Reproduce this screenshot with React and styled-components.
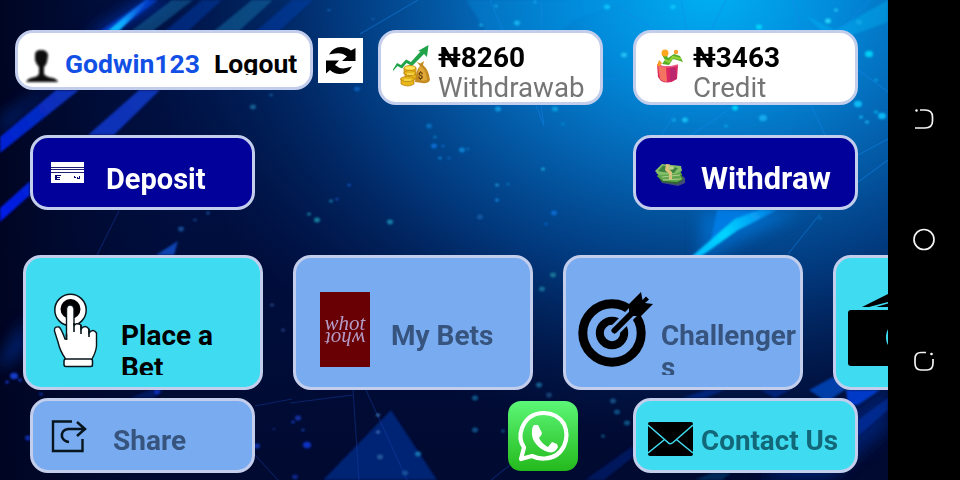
import React from "react";
import styled, { createGlobalStyle } from "styled-components";

const GlobalStyle = createGlobalStyle`
  * { box-sizing: border-box; }
  html, body { margin: 0; padding: 0; background: #000; }
  body { font-family: Roboto, "Liberation Sans", sans-serif; }
`;

const Device = styled.div`
  display: flex;
  width: 960px;
  height: 480px;
  overflow: hidden;
  background: #000;
`;

const Screen = styled.main`
  position: relative;
  width: 888px;
  height: 480px;
  overflow: hidden;
  background: #010b35;
`;

const Backdrop = styled.svg`
  position: absolute;
  inset: 0;
  display: block;
`;

const Content = styled.div`
  position: relative;
  display: flex;
  flex-direction: column;
  width: 888px;
  height: 480px;
  padding-top: 30px;
`;

const Row = styled.div`
  display: flex;
  flex: none;
  align-items: flex-start;
  height: ${(p) => p.$height}px;
  margin-bottom: ${(p) => p.$after || 0}px;
  padding-left: ${(p) => p.$left}px;
  padding-right: 30px;
  justify-content: ${(p) => (p.$spread ? "space-between" : "flex-start")};
  gap: ${(p) => p.$gap || 0}px;
`;

const tones = {
  white: "#ffffff",
  navy: "#02029a",
  cyan: "#3fdcf1",
  sky: "#78abef",
};

const Card = styled.div`
  display: flex;
  flex: none;
  align-items: flex-start;
  width: ${(p) => p.$width}px;
  height: ${(p) => p.$height || 75}px;
  border: 3px solid #c3cdec;
  border-radius: 18px;
  background: ${(p) => tones[p.$tone]};
  overflow: hidden;
`;

const UserCard = styled(Card)`
  width: 298px;
  height: 60px;
`;

const RefreshButton = styled.button`
  display: block;
  flex: none;
  width: 45px;
  height: 45px;
  margin: 8px 15px 0 5px;
  padding: 0;
  border: 0;
  background: #fff;
`;

const Spacer = styled.div`
  width: 30px;
  flex: none;
`;

const Icon = styled.svg`
  display: block;
  flex: none;
  margin-left: ${(p) => p.$left || 0}px;
  margin-top: ${(p) => p.$top || 0}px;
  overflow: visible;
`;

const Label = styled.span`
  display: block;
  flex: none;
  margin-left: ${(p) => p.$left || 0}px;
  margin-top: ${(p) => p.$top || 0}px;
  width: ${(p) => (p.$width ? `${p.$width}px` : "auto")};
  height: ${(p) => (p.$height ? `${p.$height}px` : "auto")};
  overflow: ${(p) => (p.$height ? "hidden" : "visible")};
  color: ${(p) => p.$color || "#000"};
  font-size: ${(p) => p.$size || 28}px;
  line-height: 32px;
  font-weight: 700;
  white-space: ${(p) => (p.$wrap ? "normal" : "nowrap")};
  word-break: ${(p) => (p.$wrap ? "break-all" : "normal")};
`;

const Balance = styled.div`
  display: flex;
  flex-direction: column;
  margin: 10px 0 0 ${(p) => p.$left}px;
`;

const Amount = styled.strong`
  font-size: 28px;
  line-height: 30px;
  font-weight: 700;
  white-space: nowrap;
`;

const Caption = styled.span`
  color: #757575;
  font-size: 27.7px;
  line-height: 30px;
  white-space: nowrap;
`;

const WhotCard = styled.div`
  display: flex;
  flex: none;
  flex-direction: column;
  align-items: center;
  width: 50px;
  height: 75px;
  margin: 34px 0 0 24px;
  padding-top: 21px;
  background: #690003;
  color: #b49cc8;
`;

const WhotWord = styled.span`
  display: block;
  height: 18px;
  font: italic 21px/20px "Liberation Serif", serif;
  transform: ${(p) => (p.$flipped ? "rotate(180deg)" : "none")};
`;

const WhatsAppButton = styled.button`
  display: block;
  flex: none;
  width: 70px;
  height: 70px;
  margin: 3px 0 0;
  padding: 0;
  border: 0;
  border-radius: 13px;
  background: linear-gradient(#5cf777, #24b91c);
`;

const NavBar = styled.nav`
  display: flex;
  flex: none;
  flex-direction: column;
  align-items: center;
  width: 72px;
  height: 480px;
  padding-top: 107px;
  gap: 97px;
`;

const dots = [
  [181,229,3,"#15549b"],[195,220,2,"#123f83"],[208,213,2,"#15549b"],[309,214,2,"#168ba8"],[317,220,3,"#1592ad"],[271,95,2,"#115b9e"],[253,107,3,"#146b9b"],[357,89,3,"#0962bd"],[329,10,2,"#135ba9"],[373,19,2,"#135ba9"],
  [429,126,3,"#0873c4"],[435,137,2,"#0875be"],[434,146,3,"#0873dc"],[443,146,2,"#0863b9"],[462,150,3,"#0989dd"],[468,149,2,"#0968b4"],[440,158,2,"#0b85d2"],[449,158,2,"#0961b8"],[349,185,2,"#1051bd"],[331,201,2,"#1683ae"],[337,199,2,"#1645a3"],[390,222,3,"#168eb5"],
  [481,25,2,"#1ab5ef"],[496,6,2,"#15a2eb"],[535,2,2,"#15a5ef"],[517,23,3,"#1bbdf6"],[498,109,3,"#13a1e9"],[555,109,3,"#10a6e4"],[563,124,2,"#0789d3"],[543,169,2,"#26b3e5"],[497,185,2,"#2298d8"],[508,184,2,"#086bb7"],[497,200,2,"#168ce0"],[480,217,3,"#155ca8"],[554,213,3,"#0870dc"],[546,224,2,"#075ec7"],
  [607,7,3,"#10c9ff"],[673,7,3,"#08c6fa"],[759,27,3,"#00dfff"],[836,10,2,"#2ecef9"],[828,21,3,"#2de0ff"],[859,22,3,"#12a9e9"],[624,55,3,"#29c8fa"],[869,54,4,"#00deff"],[876,80,2,"#09a1e4"],[858,104,4,"#09c8ff"],[876,112,2,"#06baf4"],[861,117,2,"#18bdf5"],[882,116,4,"#08c4ff"],[867,122,2,"#1cc1f7"],[735,108,3,"#00e1ff"],[763,118,4,"#17b2f5"],[674,120,2,"#17baf4"],[685,120,3,"#1cc8fa"],[726,126,2,"#0ba8e8"],[820,218,2,"#0b71ba"],
  [272,305,2,"#285082"],[283,330,2,"#28478d"],[14,376,4,"#1446e7"],[7,382,2,"#1239dd"],[20,380,2,"#143ad0"],[41,394,2,"#0d32b9"],[157,392,3,"#0e31c9"],[298,418,3,"#1739bb"],[293,422,2,"#1739bb"],[303,430,2,"#153b9f"],[307,445,4,"#1239de"],[274,429,2,"#112768"],[257,446,3,"#1238bd"],[295,477,3,"#112b99"],
  [378,415,2,"#4488c9"],[378,432,2,"#4a82c7"],[418,454,3,"#1781bd"],[380,457,3,"#2b61a0"],[405,473,3,"#1c5ba0"],[475,398,3,"#126498"],[475,430,3,"#135e95"],[503,431,2,"#135c95"],[553,275,3,"#21839f"],[542,289,3,"#16779e"],[539,385,3,"#166c9f"],[549,395,3,"#15497e"],[613,401,3,"#155a90"],[617,412,3,"#135a93"],[627,423,3,"#0c6194"],[603,436,2,"#14618f"],[28,438,3,"#1237c8"],
];

function Scenery() {
  return (
    <Backdrop width="888" height="480" viewBox="0 0 888 480" aria-hidden="true">
      <defs>
        <linearGradient id="base" x1="0" y1="0" x2="0" y2="1">
          <stop offset="0" stopColor="#001347" />
          <stop offset=".5" stopColor="#000e3e" />
          <stop offset="1" stopColor="#010a30" />
        </linearGradient>
        <radialGradient id="glow" gradientUnits="userSpaceOnUse" cx="0" cy="0" r="1" gradientTransform="translate(710 -10) scale(570 450)">
          <stop offset="0" stopColor="#00b0f3" />
          <stop offset=".22" stopColor="#028bdb" />
          <stop offset=".42" stopColor="#0467b6" stopOpacity=".96" />
          <stop offset=".66" stopColor="#023e85" stopOpacity=".85" />
          <stop offset="1" stopColor="#01225b" stopOpacity="0" />
        </radialGradient>
        <linearGradient id="edge">
          <stop offset="0" stopColor="#000522" />
          <stop offset="1" stopColor="#000a33" stopOpacity="0" />
        </linearGradient>
        <linearGradient id="comet" gradientUnits="userSpaceOnUse" x1="110" y1="32" x2="152" y2="0">
          <stop offset="0" stopColor="#06c6ff" />
          <stop offset=".35" stopColor="#10a3ff" />
          <stop offset="1" stopColor="#0645d8" stopOpacity=".5" />
        </linearGradient>
        <linearGradient id="beam" gradientUnits="userSpaceOnUse" x1="692" y1="257" x2="778" y2="208">
          <stop offset="0" stopColor="#08b9ff" />
          <stop offset=".4" stopColor="#00d4ff" />
          <stop offset=".75" stopColor="#07a0f5" />
          <stop offset="1" stopColor="#0782e0" stopOpacity=".3" />
        </linearGradient>
        <linearGradient id="ribbon" gradientUnits="userSpaceOnUse" x1="0" y1="220" x2="160" y2="90">
          <stop offset="0" stopColor="#0119e8" />
          <stop offset=".6" stopColor="#0830b8" />
          <stop offset="1" stopColor="#0936b4" />
        </linearGradient>
        <filter id="soft" x="-20%" y="-20%" width="140%" height="140%">
          <feGaussianBlur stdDeviation="1" />
        </filter>
        <filter id="haze" x="-30%" y="-30%" width="160%" height="160%">
          <feGaussianBlur stdDeviation="7" />
        </filter>
      </defs>
      <rect width="888" height="480" fill="url(#base)" />
      <rect width="888" height="480" fill="url(#glow)" />
      <rect width="190" height="480" fill="url(#edge)" />
      <g filter="url(#haze)">
        <path d="M85 35L140 0H175L110 35Z" fill="#0639be" opacity=".6" />
        <path d="M0 115L60 80L0 140Z" fill="#0639be" opacity=".35" />
        <path d="M760 480L888 385V430L830 480Z" fill="#0235b5" opacity=".4" />
        <path d="M0 360L24 318V350L0 370Z" fill="#0638b0" opacity=".55" />
        <path d="M700 212H800L700 262Z" fill="#0782ee" opacity=".5" />
      </g>
      <g filter="url(#soft)">
        <path d="M0 137L56 90H79L0 153ZM88 135L139 90H160L114 135ZM0 208L30 181V195L0 222Z" fill="url(#ribbon)" />
        <path d="M94 35L146 0H158L112 35Z" fill="#0649e6" opacity=".65" />
        <path d="M108 31L147 -2H152L119 31Z" fill="url(#comet)" />
        <path d="M131 31L172 0H193L153 31ZM214 31L252 0H273L239 31Z" fill="#1681b7" opacity=".42" />
        <path d="M165 31L202 0H222L188 31ZM256 31L292 0H313L279 31Z" fill="#0643bd" opacity=".42" />
        <path d="M466 0H628L576 19L559 33H487L466 0Z" fill="#009dec" opacity=".25" />
        <path d="M805 15L835 30L888 0V22L833 42Z" fill="#0ac0fb" opacity=".32" />
        <path d="M717 210L775 211L711 240Z" fill="#0782ee" opacity=".75" />
        <path d="M691 257L735 219L762 209H780L738 230L700 257Z" fill="url(#beam)" />
        <path d="M156 255L178 241L174 255Z" fill="#1452ce" opacity=".8" />
        <path d="M323 480L391 410L437 480Z" fill="#063bb8" opacity=".5" />
        <path d="M809 390L833 377L846 389L827 402Z" fill="#0753d5" opacity=".7" />
        <path d="M846 390H880L858 405H848Z" fill="#0443ea" opacity=".8" />
        <path d="M858 420L888 398V410L858 436ZM682 398L706 390H725L705 398ZM760 390H790L775 398Z" fill="#033bcc" opacity=".4" />
        <path d="M130 398L150 390H164L153 398ZM585 480L633 446V457L604 480Z" fill="#0638c4" opacity=".3" />
        <path d="M694 480L712 473H731L722 480Z" fill="#1173b4" opacity=".3" />
      </g>
      <g fill="none" stroke="#1687ed" strokeWidth="1.1" opacity=".42">
        <path d="M360 34L418 0M490 0L503 31M541 0L542 31M620 79H602M620 8L654 30M681 0L687 31M726 0L711 31M793 0L802 29M888 92L858 70M870 0L840 31M676 112L660 137M731 108L690 136M811 105L825 135M858 155L888 139M858 182L888 160M788 254L820 214M536 105L544 126L541 105" />
        <path d="M97 255L119 211M290 403L353 395M353 390L359 480M366 390L407 480M491 480L515 461M255 406L292 399M255 455L278 480" stroke="#1840ad" />
      </g>
      <g filter="url(#soft)">
        {dots.map(([x, y, r, color], i) => (
          <ellipse key={i} cx={x} cy={y} rx={r} ry={r * 0.8} fill={color} opacity=".85" />
        ))}
      </g>
    </Backdrop>
  );
}

const UserIcon = () => (
  <Icon $left={7} $top={16} width="34" height="34" viewBox="0 0 34 34">
    <defs><filter id="userSoft"><feGaussianBlur stdDeviation="1" /></filter></defs>
    <path filter="url(#userSoft)" d="M10 6Q10 1 16 1Q22 1 23 6L22 13Q21 16 19 18V25Q21 28 28 29Q32 30 33 33H1Q3 29 8 28.500Q14 27 14 24V18Q11 15 10 11Z" fill="#080808" />
  </Icon>
);

const RefreshIcon = () => (
  <Icon width="45" height="45" viewBox="0 0 45 45">
    <path d="M11 16.500Q15 9 23 9Q29 9 33 12.500L37.500 10V23H24L29 18.500Q24 14 17 15.500Q13 16 11 16.500ZM8 22.500H21L17 27Q22 31.500 28 30L34 28.500Q30 36 22 36Q16 36 12 32L8 35.500Z" />
  </Icon>
);

const ProfitIcon = () => (
  <Icon $left={12} $top={12} width="38" height="43" viewBox="0 0 38 43">
    <path d="M0 24.500L4 18L8 20L13 14.500L18 17L27.500 6.500L25 6L35.500 0L34 12L31 9L19 21L13.500 18L9 23.500L4.500 21L0 26Z" fill="#21a349" />
    <path d="M24 17L27.500 18.500L31 16L30 20Q36 25 37 35Q35 39 29 38L22 37Q23 25 27 21Z" fill="#c48b22" />
    <path d="M27 21Q33 24 34 35L29 36Q23 31 27 21Z" fill="#dfa837" />
    <g fill="#e8b719" stroke="#bd8414" strokeWidth=".8">
      <path d="M8 34V39Q15 43 21 39V34ZM11 23V29H23V23ZM12 29V34H23V29Z" />
      <ellipse cx="14.500" cy="34" rx="7" ry="2.500" /><ellipse cx="17" cy="28" rx="6" ry="2.500" /><ellipse cx="17" cy="23" rx="6" ry="2.500" fill="#ffdc42" />
    </g>
    <path d="M13 23H21M14 29H21M11 35H18" stroke="#fff177" />
    <text x="25" y="34" fontSize="9" fontWeight="bold" fill="#5d3a08">$</text>
  </Icon>
);

const PlantIcon = () => (
  <Icon $left={20} $top={17} width="28" height="34" viewBox="0 0 28 34">
    <path d="M1 14Q7 18 22 15L21 29Q13 35 5 31L2 27Z" fill="#dc2860" />
    <path d="M2 15L10 17L11 32Q7 32 4 29Z" fill="#f57361" />
    <path d="M14 17Q22 15 20 29L14 31Z" fill="#bc2870" />
    <path d="M2 15Q10 19 22 15" fill="none" stroke="#ed5c82" strokeWidth="1.5" />
    <path d="M6 14L9 10L6 5L10 3L12 8L18 4L24 6L27 12L21 10L17 9L13 15Z" fill="#55ae25" />
    <path d="M9 10L13 12L17 7L25 9" stroke="#95d238" strokeWidth="2" fill="none" />
    <circle cx="9" cy="3" r="3.500" fill="#ffa51f" /><circle cx="20" cy="2" r="2.200" fill="#f79e2d" />
    <path d="M1 16L3 10L6 13L4 16Z" fill="#f99a22" />
  </Icon>
);

const CreditCardIcon = () => (
  <Icon $left={18} $top={24} width="33" height="22" viewBox="0 0 33 22" shapeRendering="crispEdges">
    <path d="M0 0H33V21H0Z" fill="#fff" />
    <path d="M0 5.500H33M0 7.500H33M0 10.500H33" stroke="#202078" />
    <path d="M4 13H10V14H6V15H9V16H6V17H9V18H4ZM23 14H24V15H25V16H23ZM26 15H27V16H26ZM28 14H29V17H26V16H28Z" fill="#060674" />
  </Icon>
);

const CashIcon = () => (
  <Icon $left={19} $top={25} width="32" height="25" viewBox="0 0 32 25">
    <path d="M4 14L24 10L30 15V20L23 23L7 20Z" fill="#424d76" />
    <path d="M2 13L8 6L26 9L28 17L22 21L7 19Z" fill="#2f672d" />
    <path d="M2 13L10 8L25 12L28 16L22 19L8 18ZM1 10L8 4L25 8L27 12L10 16Z" fill="#61a64c" />
    <path d="M0 8L7 1L26 3L27 8L20 11L4 12Z" fill="#85bf69" />
    <path d="M3 8L8 2.500L23 5L19 10L7 9Z" fill="#408341" />
    <path d="M11 1L15 1.500L14 6L17 9V17H14V11L10 7Z" fill="#dec27a" />
    <path d="M7 14L25 12M8 17L26 16" stroke="#b1cd8b" />
    <ellipse cx="16" cy="5" rx="3" ry="1.700" fill="#bad28b" />
  </Icon>
);

const TouchIcon = () => (
  <Icon $left={28} $top={33} width="44" height="78" viewBox="0 0 44 78">
    <circle cx="16.500" cy="19" r="15.700" fill="#fff" stroke="#07151a" strokeWidth="1.500" />
    <circle cx="16.500" cy="18" r="10" fill="#000" />
    <path d="M12.500 48V18Q13 14 16 14Q19.500 14 20 18V35Q22 31 27 34V38Q31 33 35 38V42Q39 37 42.500 42V55Q42 61 38 68V75H11V67Q6 60 4 51L0.500 40Q0 35 5 36Q7 37 11 48Z" fill="#fff" stroke="#0a1418" strokeWidth="1.400" />
    <path d="M20 32V41M27 34V43M35 38V46M12.500 43V49" fill="none" stroke="#07151a" strokeWidth="1.600" />
    <rect x="10" y="68" width="28.500" height="7.500" rx="2" fill="#fff" stroke="#07151a" strokeWidth="1.500" />
  </Icon>
);

const TargetIcon = () => (
  <Icon $left={12} $top={34} width="75" height="75" viewBox="0 0 75 75">
    <circle cx="34" cy="41" r="29.200" fill="none" stroke="#000" strokeWidth="9" />
    <circle cx="34" cy="41" r="12.200" fill="none" stroke="#000" strokeWidth="8" />
    <path d="M35 40L63 12" stroke="#78abef" strokeWidth="11" />
    <path d="M36.500 38.500L59 16" stroke="#000" strokeWidth="6" strokeLinecap="round" />
    <path d="M51 20V12L63 0L64.500 8L68 4.500L71 7.500L67 11L75 12L63 24H53Z" />
  </Icon>
);

const WalletIcon = () => (
  <Icon $left={12} $top={34} width="75" height="75" viewBox="0 0 75 75">
    <path d="M14 15L40 2V10L21 15ZM28 15L40 11.500V15Z" />
    <rect y="18" width="75" height="56" rx="3" />
    <path d="M41 36Q38 39 38 46Q38 51 41 54Z" fill="#3fdcf1" />
  </Icon>
);

const ShareIcon = () => (
  <Icon $left={18} $top={19} width="36" height="33" viewBox="0 0 36 33" fill="none" stroke="#07151f">
    <path d="M21 1.500H2V31H31.500V19" strokeWidth="2.400" />
    <path d="M18 22Q13 21.500 11 17Q10 10 17 9H33M26 2L34 9L26 16" strokeWidth="2.500" />
  </Icon>
);

const WhatsAppIcon = () => (
  <Icon width="70" height="70" viewBox="0 0 70 70">
    <path d="M13 58L16 46.500Q10 38 14 27Q20 12 36 12Q49 12 56 23Q61 34 56 45Q50 57 37 57.500Q30 58 24 55Z" fill="none" stroke="#fff" strokeWidth="4.200" strokeLinejoin="round" />
    <path d="M26 24H30L34 32Q34 34 31 37Q34 43 40 46L44 41L49 43L50 46Q47 53 40 51Q33 49 28 43Q23 37 24 29Q24 26 26 24Z" fill="#fff" />
  </Icon>
);

const MailIcon = () => (
  <Icon $left={12} $top={21} width="45" height="34" viewBox="0 0 45 34">
    <rect width="45" height="34" rx="2" />
    <path d="M0 3L20 20.500Q22 23 25 20.500L45 3M0 31L16 18M45 31L29 18" fill="none" stroke="#3fdcf1" strokeWidth="1.600" />
  </Icon>
);

const NavIcon = styled.svg`
  display: block;
  flex: none;
  width: 24px;
  height: 24px;
  overflow: visible;
`;

export default function App() {
  return (
    <>
      <GlobalStyle />
      <Device>
        <Screen>
          <Scenery />
          <Content>
            <Row $left={15} $height={75} $after={30}>
              <UserCard $tone="white">
                <UserIcon />
                <Label $left={6} $top={15} $width={149} $size={26.5} $color="#1250e5">Godwin123</Label>
                <Label $top={15} $height={27} $size={26.5}>Logout</Label>
              </UserCard>
              <RefreshButton aria-label="Refresh"><RefreshIcon /></RefreshButton>
              <Card $tone="white" $width={225}>
                <ProfitIcon />
                <Balance $left={7}><Amount>₦8260</Amount><Caption>Withdrawab</Caption></Balance>
              </Card>
              <Spacer />
              <Card $tone="white" $width={225}>
                <PlantIcon />
                <Balance $left={9}><Amount>₦3463</Amount><Caption>Credit</Caption></Balance>
              </Card>
            </Row>
            <Row $left={30} $height={75} $after={45} $spread>
              <Card $tone="navy" $width={225}>
                <CreditCardIcon />
                <Label $left={22} $top={25} $size={29} $color="#fff">Deposit</Label>
              </Card>
              <Card $tone="navy" $width={225}>
                <CashIcon />
                <Label $left={14} $top={25} $size={30.8} $color="#fff">Withdraw</Label>
              </Card>
            </Row>
            <Row $left={23} $height={135} $after={8} $gap={30}>
              <Card $tone="cyan" $width={240} $height={135}>
                <TouchIcon />
                <Label $left={23} $top={62} $width={105} $height={55} $wrap>Place a Bet</Label>
              </Card>
              <Card $tone="sky" $width={240} $height={135}>
                <WhotCard><WhotWord>whot</WhotWord><WhotWord $flipped>whot</WhotWord></WhotCard>
                <Label $left={21} $top={62} $color="#36547d">My Bets</Label>
              </Card>
              <Card $tone="sky" $width={240} $height={135}>
                <TargetIcon />
                <Label $left={8} $top={62} $width={139} $height={55} $size={27.8} $wrap $color="#36547d">Challengers</Label>
              </Card>
              <Card $tone="cyan" $width={240} $height={135}><WalletIcon /></Card>
            </Row>
            <Row $left={30} $height={75} $spread>
              <Card $tone="sky" $width={225}>
                <ShareIcon />
                <Label $left={26} $top={24} $color="#36547d">Share</Label>
              </Card>
              <Row $left={227} $height={75}>
                <WhatsAppButton aria-label="WhatsApp"><WhatsAppIcon /></WhatsAppButton>
              </Row>
              <Card $tone="cyan" $width={225}>
                <MailIcon />
                <Label $left={8} $top={24} $size={27.8} $color="#126879">Contact Us</Label>
              </Card>
            </Row>
          </Content>
        </Screen>
        <NavBar>
          <NavIcon viewBox="0 0 24 24" fill="none" stroke="#f3f3f3" strokeWidth="1.700">
            <path d="M8 3H13Q20.500 3 20.500 10V14Q20.500 21 13 21H3" /><circle cx="4.500" cy="3.500" r="1.200" fill="#fff" stroke="none" />
          </NavIcon>
          <NavIcon viewBox="0 0 24 24" fill="none" stroke="#f3f3f3" strokeWidth="1.700"><circle cx="12" cy="11.500" r="10" /></NavIcon>
          <NavIcon viewBox="0 0 24 24" fill="none" stroke="#f3f3f3" strokeWidth="1.700">
            <path d="M14 3.500H9Q3 3.500 3 10V14Q3 21 9 21H15Q21 21 21 14V10" /><circle cx="19.500" cy="5" r="1.300" fill="#fff" stroke="none" />
          </NavIcon>
        </NavBar>
      </Device>
    </>
  );
}
